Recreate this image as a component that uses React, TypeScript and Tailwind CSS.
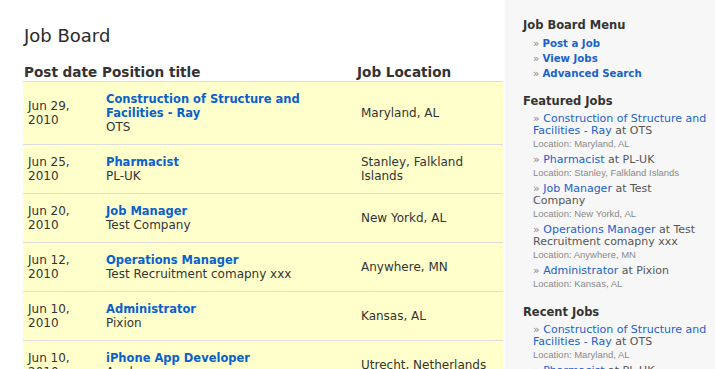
import React from "react";

const rows = [
  { date: "Jun 29, 2010", title: "Construction of Structure and Facilities - Ray", company: "OTS", loc: "Maryland, AL" },
  { date: "Jun 25, 2010", title: "Pharmacist", company: "PL-UK", loc: "Stanley, Falkland Islands" },
  { date: "Jun 20, 2010", title: "Job Manager", company: "Test Company", loc: "New Yorkd, AL" },
  { date: "Jun 12, 2010", title: "Operations Manager", company: "Test Recruitment comapny xxx", loc: "Anywhere, MN" },
  { date: "Jun 10, 2010", title: "Administrator", company: "Pixion", loc: "Kansas, AL" },
  { date: "Jun 10, 2010", title: "iPhone App Developer", company: "Apple", loc: "Utrecht, Netherlands" },
];

const featured = [
  { title: "Construction of Structure and Facilities - Ray", company: "OTS", loc: "Maryland, AL" },
  { title: "Pharmacist", company: "PL-UK", loc: "Stanley, Falkland Islands" },
  { title: "Job Manager", company: "Test Company", loc: "New Yorkd, AL" },
  { title: "Operations Manager", company: "Test Recruitment comapny xxx", loc: "Anywhere, MN" },
  { title: "Administrator", company: "Pixion", loc: "Kansas, AL" },
];

const recent = [
  { title: "Construction of Structure and Facilities - Ray", company: "OTS", loc: "Maryland, AL" },
  { title: "Pharmacist", company: "PL-UK", loc: "Stanley, Falkland Islands" },
];

function SideItem({ item }: { item: { title: string; company: string; loc: string } }) {
  return (
    <li className="mb-[4px]">
      <div className="text-[11px] leading-[12px] text-[#555]">
        <span className="text-[#888]">»</span>{" "}
        <a className="text-[#1a62cc]">{item.title}</a> at {item.company}
      </div>
      <div className="text-[9.5px] leading-[13px] text-[#8a8a8a] [font-family:'Liberation_Sans',Arial,sans-serif]">
        Location: {item.loc}
      </div>
    </li>
  );
}

export default function App() {
  return (
    <div className="flex w-[715px] h-[369px] overflow-hidden bg-white text-[#333] [font-family:'DejaVu_Sans',Verdana,sans-serif]">
      <main className="w-[504px] shrink-0 pl-[23px] pr-[1px] pt-[25px]">
        <h1 className="pl-px text-[18px] leading-[22px] font-normal text-[#2b2b2b]">Job Board</h1>
        <table className="mt-[17px] w-[480px] table-fixed border-collapse">
          <colgroup>
            <col className="w-[78px]" />
            <col className="w-[255px]" />
            <col className="w-[147px]" />
          </colgroup>
          <thead>
            <tr className="border-b border-[#dcdcdc]">
              <th className="text-left font-bold text-[13.6px] leading-[16px] pl-[1px] pb-px text-[#333]">Post date</th>
              <th className="text-left font-bold text-[13.6px] leading-[16px] pl-[1px] pb-px text-[#333]">Position title</th>
              <th className="text-left font-bold text-[13.6px] leading-[16px] pl-[1px] pb-px text-[#333]">Job Location</th>
            </tr>
          </thead>
          <tbody>
            {rows.map((r, i) => (
              <tr key={i} className="bg-[#ffffcc] border-b border-[#dcdcdc]">
                <td className="align-middle py-[10px] px-[5px] text-[12px] leading-[14px]">{r.date}</td>
                <td className="align-middle py-[10px] px-[5px] text-[12px] leading-[14px]">
                  <a className="block font-bold text-[11.5px] text-[#0a5fcf]">{r.title}</a>
                  <div>{r.company}</div>
                </td>
                <td className="align-middle py-[10px] px-[5px] text-[12px] leading-[14px]">{r.loc}</td>
              </tr>
            ))}
          </tbody>
        </table>
      </main>
      <aside className="flex-1 flex bg-[#f7f7f7]">
        <div className="w-[4px] shrink-0 bg-gradient-to-r from-[#fbfbfb] to-[#f3f3f3]" />
        <div className="flex-1 pl-[15px] pr-[8.5px] pt-[18px]">
          <h3 className="font-bold text-[11.5px] leading-[14px] text-[#333]">Job Board Menu</h3>
          <ul className="mt-[3.5px] ml-[10px]">
            {["Post a Job", "View Jobs", "Advanced Search"].map((t) => (
              <li key={t} className="text-[10.2px] leading-[15px]">
                <span className="text-[#888] font-normal">»</span>{" "}
                <a className="font-bold text-[#1a62cc]">{t}</a>
              </li>
            ))}
          </ul>
          <h3 className="mt-[13.5px] font-bold text-[11.5px] leading-[14px] text-[#333]">Featured Jobs</h3>
          <ul className="mt-[5px] ml-[10px]">
            {featured.map((f, i) => (
              <SideItem key={i} item={f} />
            ))}
          </ul>
          <h3 className="mt-[15px] font-bold text-[11.5px] leading-[14px] text-[#333]">Recent Jobs</h3>
          <ul className="mt-[5px] ml-[10px]">
            {recent.map((f, i) => (
              <SideItem key={i} item={f} />
            ))}
          </ul>
        </div>
      </aside>
    </div>
  );
}
